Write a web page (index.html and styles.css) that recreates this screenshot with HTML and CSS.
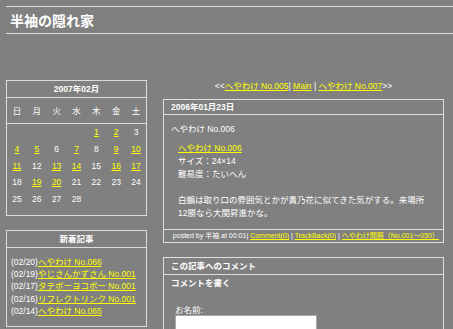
FILE: index.html
```html
<!DOCTYPE html>
<html>
<head>
    <title>半袖の隠れ家</title>
    <link rel="stylesheet" href="styles.css">
</head>
<body>
    <div class="site-title">半袖の隠れ家</div>

    <div class="layout">
        <div class="side">
            <div class="box calendar">
                <div class="box-head center">2007年02月</div>
                <div class="cal-week">
                    <span>日</span><span>月</span><span>火</span><span>水</span><span>木</span><span>金</span><span>土</span>
                </div>
                <div class="cal-days">
                    <span></span><span></span><span></span><span></span>
                    <a href="#">1</a><a href="#">2</a><span>3</span>
                    <a href="#">4</a><a href="#">5</a><span>6</span><a href="#">7</a><span>8</span><a href="#">9</a><a href="#">10</a>
                    <a href="#">11</a><span>12</span><a href="#">13</a><a href="#">14</a><span>15</span><a href="#">16</a><a href="#">17</a>
                    <span>18</span><a href="#">19</a><a href="#">20</a><span>21</span><span>22</span><span>23</span><span>24</span>
                    <span>25</span><span>26</span><span>27</span><span>28</span>
                </div>
            </div>

            <div class="box recent">
                <div class="box-head center">新着記事</div>
                <ul class="recent-list">
                    <li>(02/20)<a href="#">へやわけ No.066</a></li>
                    <li>(02/19)<a href="#">やじさんかずさん No.001</a></li>
                    <li>(02/17)<a href="#">タテボーヨコボー No.001</a></li>
                    <li>(02/16)<a href="#">リフレクトリンク No.001</a></li>
                    <li>(02/14)<a href="#">へやわけ No.065</a></li>
                </ul>
            </div>
        </div>

        <div class="main">
            <div class="entry-nav">&lt;&lt;<a href="#">へやわけ No.005</a>| <a href="#">Main</a> | <a href="#">へやわけ No.007</a>&gt;&gt;</div>

            <div class="box entry">
                <div class="box-head">2006年01月23日</div>
                <div class="entry-body">
                    <div class="entry-title">へやわけ No.006</div>
                    <div class="entry-text">
                        <p><a href="#">へやわけ No.006</a><br>
                        サイズ：24×14<br>
                        難易度：たいへん</p>
                        <p>白鵬は取り口の雰囲気とかが貴乃花に似てきた気がする。来場所<br>
                        12勝なら大関昇進かな。</p>
                    </div>
                </div>
                <div class="entry-foot">posted by 半袖 at 00:01| <a href="#">Comment(0)</a> | <a href="#">TrackBack(0)</a> | <a href="#">へやわけ問題（No.001～050）</a></div>
            </div>

            <div class="box comments">
                <div class="box-head">この記事へのコメント</div>
                <div class="comment-body">
                    <div class="comment-title">コメントを書く</div>
                    <div class="comment-form">
                        <label for="author">お名前:</label>
                        <input type="text" id="author">
                    </div>
                </div>
            </div>
        </div>
    </div>
</body>
</html>
```

FILE: styles.css
```css
body {
    margin: 0;
    background-color: #808080;
    color: #fff;
    font-family: "Liberation Sans", "Noto Sans CJK JP", sans-serif;
    font-size: 8.5px;
    overflow: hidden;
}

a {
    color: #ffff00;
}

.site-title {
    margin: 6px 0 0 6px;
    height: 26px;
    padding-left: 4px;
    border-top: 1px solid #ddd;
    border-bottom: 1px solid #ddd;
    display: flex;
    align-items: center;
    font-size: 14px;
    font-weight: bold;
}

.layout {
    display: flex;
    align-items: flex-start;
    margin-top: 46px;
    padding-left: 6px;
}

.side {
    width: 141px;
    flex-shrink: 0;
}

.main {
    width: 281px;
    margin-left: 16px;
}

.box {
    border: 1px solid #ddd;
}

.box-head {
    height: 16px;
    line-height: 16px;
    padding-left: 7px;
    font-weight: bold;
    border-bottom: 1px solid #ddd;
}

.box-head.center {
    padding-left: 0;
    text-align: center;
}

/* calendar */
.cal-week {
    display: grid;
    grid-template-columns: repeat(7, 1fr);
    height: 25px;
    line-height: 27px;
    text-align: center;
    border-bottom: 1px solid #ddd;
}

.cal-days {
    display: grid;
    grid-template-columns: repeat(7, 1fr);
    grid-auto-rows: 16.75px;
    line-height: 16px;
    text-align: center;
    padding-bottom: 7px;
}

/* recent entries */
.recent {
    margin-top: 14px;
}

.recent-list {
    list-style: none;
    margin: 0;
    padding: 8px 0 9px 4px;
    line-height: 12.3px;
}

/* entry */
.entry-nav {
    text-align: center;
    line-height: 12px;
    margin-bottom: 7px;
}

.entry .box-head {
    height: 14px;
    line-height: 14px;
}

.entry-body {
    padding: 8px 7px 9px 7px;
    line-height: 13px;
}

.entry-title {
    margin-bottom: 6px;
}

.entry-text {
    padding-left: 7px;
}

.entry-text p {
    margin: 0 0 13px 0;
}

.entry-text p:last-child {
    margin-bottom: 0;
}

.entry-foot {
    height: 12px;
    line-height: 12px;
    font-size: 7px;
    text-align: right;
    padding-right: 4px;
    border-top: 1px solid #ddd;
    white-space: nowrap;
}

/* comments */
.comments {
    margin-top: 14px;
}

.comment-body {
    padding: 2px 7px 0 7px;
}

.comment-title {
    line-height: 13px;
    font-weight: bold;
}

.comment-form {
    margin-top: 16px;
    padding-left: 4px;
}

.comment-form label {
    display: block;
    line-height: 9px;
}

.comment-form input {
    width: 142px;
    height: 18px;
    box-sizing: border-box;
    margin: 0;
    border: 1px solid #aaa;
    background: #fff;
}
```
